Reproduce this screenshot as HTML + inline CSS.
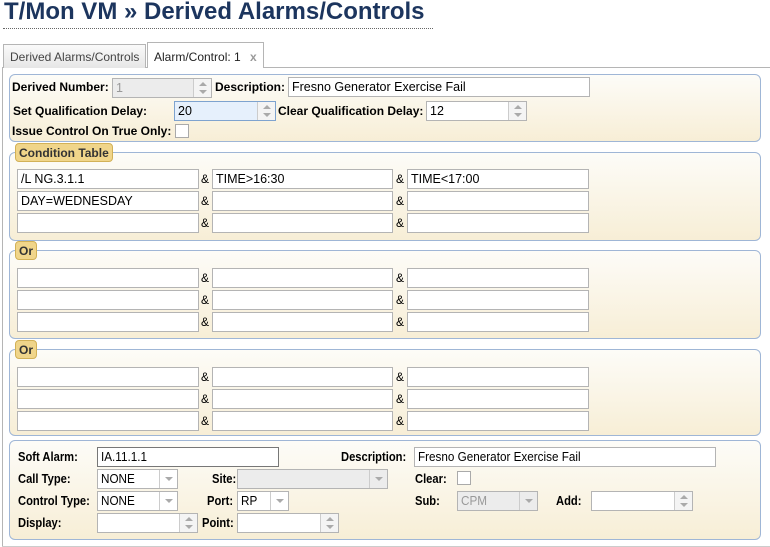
<!DOCTYPE html>
<html><head><meta charset="utf-8"><style>
*{box-sizing:border-box}
body{margin:0;width:770px;height:547px;background:#fff;font-family:"Liberation Sans",Arial,sans-serif;font-size:12px;color:#000;position:relative;overflow:hidden}
.a{position:absolute}
h1{position:absolute;left:4px;top:-2px;margin:0;font-size:24px;font-weight:bold;color:#1c355e;white-space:nowrap}
.dot{left:3px;top:28px;width:430px;border-top:1px dotted #666}
.tab{top:44px;height:24px;border:1px solid #b5b5b5;border-bottom:none;background:linear-gradient(#fafafa,#e6e6e6);padding:5px 0 0 6px;color:#444;font-size:12px;white-space:nowrap}
.tab.on{background:#fff;color:#222;top:42px;height:26px;padding-top:7px}
.bar{left:2px;top:67px;width:768px;border-top:1px solid #b5b5b5}
.vl{left:2px;top:67px;height:480px;border-left:1px solid #b5b5b5}
.pan{left:9px;width:752px;border:1px solid #9fb6d6;border-radius:6px;background:linear-gradient(#fdfcf8,#f7eed6)}
.lg{left:15px;height:19px;border:1px solid #d2b157;border-radius:4px;background:#f0d58a;font-size:12px;font-weight:bold;padding:2px 3px;color:#333}
.i{position:absolute;height:20px;border:1px solid #b4b4b4;background:#fff;padding:2px 3px;font-size:12.5px;white-space:nowrap;overflow:hidden}
.amp{position:absolute;font-size:12px}
.b{position:absolute;font-weight:bold;white-space:nowrap;z-index:2}
.n{font-size:13px;transform:scaleX(.86);transform-origin:0 0}
.t{display:inline-block;transform:scaleX(.9);transform-origin:0 0;font-size:13px}
.sp{position:absolute;right:0;top:0;width:18px;height:100%;border-left:1px solid #ccc;background:#f4f4f4}
.sp:before{content:"";position:absolute;left:5px;top:3px;border:4px solid transparent;border-bottom:4px solid #aaa;border-top:none}
.sp:after{content:"";position:absolute;left:5px;bottom:3px;border:4px solid transparent;border-top:4px solid #aaa;border-bottom:none}
.dd{position:absolute;right:0;top:0;width:18px;height:100%;border-left:1px solid #ccc}
.dd:after{content:"";position:absolute;left:5px;top:7px;border:4px solid transparent;border-top:4px solid #aaa;border-bottom:none}
.cb{position:absolute;width:14px;height:14px;border:1px solid #aaa;background:#fff}
.dis{background:#ececec;color:#999}
</style></head><body>
<h1>T/Mon VM » Derived Alarms/Controls</h1>
<div class="a dot"></div>
<div class="a bar"></div>
<div class="a vl"></div>
<div class="a tab" style="left:3px;width:143px">Derived Alarms/Controls</div>
<div class="a tab on" style="left:147px;width:117px">Alarm/Control: 1 <span style="color:#999;font-weight:bold;margin-left:6px">x</span></div>

<div class="a pan" style="top:74px;height:68px"></div>
<div class="b" style="left:12px;top:80px">Derived Number:</div>
<div class="i dis" style="left:112px;top:78px;width:100px">1<span class="sp"></span></div>
<div class="b" style="left:215px;top:80px">Description:</div>
<div class="i" style="left:288px;top:77px;width:302px">Fresno Generator Exercise Fail</div>
<div class="b" style="left:13px;top:104px">Set Qualification Delay:</div>
<div class="i" style="left:174px;top:101px;width:102px;background:#e6f0fc;border-color:#7ea3cf">20<span class="sp"></span></div>
<div class="b" style="left:278px;top:104px">Clear Qualification Delay:</div>
<div class="i" style="left:426px;top:101px;width:101px">12<span class="sp"></span></div>
<div class="b" style="left:12px;top:124px">Issue Control On True Only:</div>
<div class="cb" style="left:175px;top:124px"></div>

<div class="a pan" style="top:152px;height:89px"></div>
<div class="a lg" style="top:143px">Condition Table</div>
<div class="a pan" style="top:250px;height:89px"></div>
<div class="a lg" style="top:241px">Or</div>
<div class="a pan" style="top:349px;height:87px"></div>
<div class="a lg" style="top:340px">Or</div>

<div class="i" style="left:17px;top:169px;width:182px">/L NG.3.1.1</div><span class="amp" style="left:201px;top:172px">&amp;</span><div class="i" style="left:212px;top:169px;width:181px">TIME&gt;16:30</div><span class="amp" style="left:396px;top:172px">&amp;</span><div class="i" style="left:407px;top:169px;width:182px">TIME&lt;17:00</div>
<div class="i" style="left:17px;top:191px;width:182px">DAY=WEDNESDAY</div><span class="amp" style="left:201px;top:194px">&amp;</span><div class="i" style="left:212px;top:191px;width:181px"></div><span class="amp" style="left:396px;top:194px">&amp;</span><div class="i" style="left:407px;top:191px;width:182px"></div>
<div class="i" style="left:17px;top:213px;width:182px"></div><span class="amp" style="left:201px;top:216px">&amp;</span><div class="i" style="left:212px;top:213px;width:181px"></div><span class="amp" style="left:396px;top:216px">&amp;</span><div class="i" style="left:407px;top:213px;width:182px"></div>

<div class="i" style="left:17px;top:268px;width:182px"></div><span class="amp" style="left:201px;top:271px">&amp;</span><div class="i" style="left:212px;top:268px;width:181px"></div><span class="amp" style="left:396px;top:271px">&amp;</span><div class="i" style="left:407px;top:268px;width:182px"></div>
<div class="i" style="left:17px;top:290px;width:182px"></div><span class="amp" style="left:201px;top:293px">&amp;</span><div class="i" style="left:212px;top:290px;width:181px"></div><span class="amp" style="left:396px;top:293px">&amp;</span><div class="i" style="left:407px;top:290px;width:182px"></div>
<div class="i" style="left:17px;top:312px;width:182px"></div><span class="amp" style="left:201px;top:315px">&amp;</span><div class="i" style="left:212px;top:312px;width:181px"></div><span class="amp" style="left:396px;top:315px">&amp;</span><div class="i" style="left:407px;top:312px;width:182px"></div>

<div class="i" style="left:17px;top:367px;width:182px"></div><span class="amp" style="left:201px;top:370px">&amp;</span><div class="i" style="left:212px;top:367px;width:181px"></div><span class="amp" style="left:396px;top:370px">&amp;</span><div class="i" style="left:407px;top:367px;width:182px"></div>
<div class="i" style="left:17px;top:389px;width:182px"></div><span class="amp" style="left:201px;top:392px">&amp;</span><div class="i" style="left:212px;top:389px;width:181px"></div><span class="amp" style="left:396px;top:392px">&amp;</span><div class="i" style="left:407px;top:389px;width:182px"></div>
<div class="i" style="left:17px;top:411px;width:182px"></div><span class="amp" style="left:201px;top:414px">&amp;</span><div class="i" style="left:212px;top:411px;width:181px"></div><span class="amp" style="left:396px;top:414px">&amp;</span><div class="i" style="left:407px;top:411px;width:182px"></div>

<div class="a pan" style="top:440px;height:100px"></div>
<div class="a" style="left:2px;top:546px;width:768px;border-top:1px solid #ccc"></div>
<div class="b n" style="left:18px;top:449px">Soft Alarm:</div>
<div class="i" style="left:97px;top:447px;width:182px;border-color:#777;padding-top:1px"><span class="t">IA.11.1.1</span></div>
<div class="b n" style="left:341px;top:449px">Description:</div>
<div class="i" style="left:414px;top:447px;width:302px;padding-top:1px"><span class="t">Fresno Generator Exercise Fail</span></div>
<div class="b n" style="left:18px;top:471px">Call Type:</div>
<div class="i" style="left:97px;top:469px;width:81px;padding-top:1px"><span class="t">NONE</span><span class="dd"></span></div>
<div class="b n" style="left:212px;top:471px">Site:</div>
<div class="i dis" style="left:237px;top:469px;width:151px"><span class="dd"></span></div>
<div class="b n" style="left:415px;top:471px">Clear:</div>
<div class="cb" style="left:457px;top:471px"></div>
<div class="b n" style="left:18px;top:493px">Control Type:</div>
<div class="i" style="left:97px;top:491px;width:81px;padding-top:1px"><span class="t">NONE</span><span class="dd"></span></div>
<div class="b n" style="left:207px;top:493px">Port:</div>
<div class="i" style="left:237px;top:491px;width:52px;padding-top:1px"><span class="t">RP</span><span class="dd"></span></div>
<div class="b n" style="left:415px;top:493px">Sub:</div>
<div class="i dis" style="left:457px;top:491px;width:81px;padding-top:1px"><span class="t">CPM</span><span class="dd"></span></div>
<div class="b n" style="left:556px;top:493px">Add:</div>
<div class="i" style="left:591px;top:491px;width:102px"><span class="sp"></span></div>
<div class="b n" style="left:18px;top:515px">Display:</div>
<div class="i" style="left:97px;top:513px;width:101px"><span class="sp"></span></div>
<div class="b n" style="left:202px;top:515px">Point:</div>
<div class="i" style="left:237px;top:513px;width:102px"><span class="sp"></span></div>
</body></html>
